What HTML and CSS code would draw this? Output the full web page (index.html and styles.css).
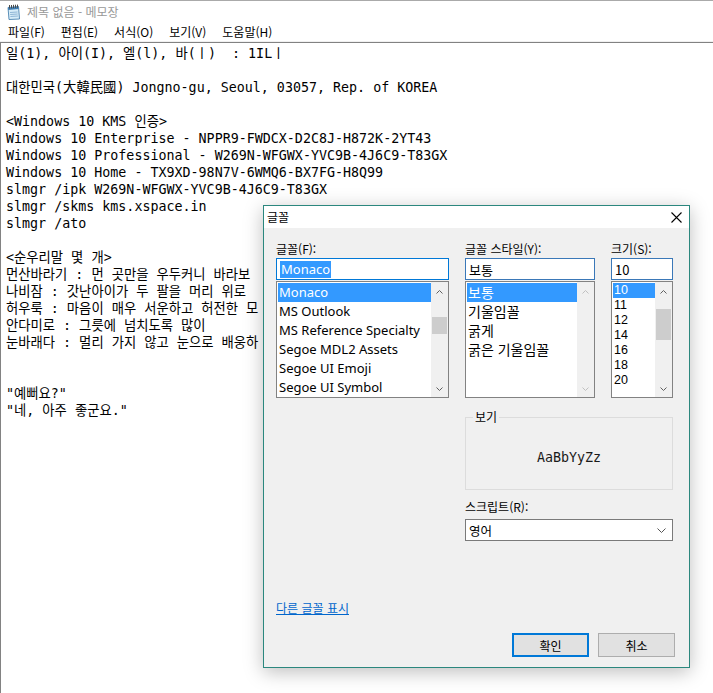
FILE: index.html
```html
<!DOCTYPE html>
<html lang="ko">
<head>
<meta charset="utf-8">
<title>제목 없음 - 메모장</title>
<link rel="stylesheet" href="styles.css">
</head>
<body>
<div class="notepad">
  <div class="titlebar">
    <svg class="app-icon" width="16" height="16" viewBox="0 0 16 16">
      <path d="M3 3.5 L13.5 2.5 L14.5 15 L4 15.5 Z" fill="#d6ecf8" stroke="#5b8fb8" stroke-width="1"/>
      <path d="M3 3.5 L13.5 2.5 L13.7 5 L3.2 6 Z" fill="#3f7fb5"/>
      <path d="M5 8.5 L12.5 8 M5.2 10.5 L12.7 10 M5.4 12.5 L12.9 12" stroke="#8fb6d6" stroke-width="1"/>
      <path d="M4.5 1 V4.5 M6.5 1 V4.3 M8.5 0.8 V4.1 M10.5 0.7 V3.9 M12.5 0.6 V3.7" stroke="#4a4a4a" stroke-width="1"/>
    </svg>
    <span class="title">제목 없음 - 메모장</span>
  </div>
  <div class="menubar">
    <span class="menu">파일(F)</span>
    <span class="menu">편집(E)</span>
    <span class="menu">서식(O)</span>
    <span class="menu">보기(V)</span>
    <span class="menu">도움말(H)</span>
  </div>
  <div class="edit">
    <div class="ln">일(1), 아이(I), 엘(l), 바(ㅣ)  : 1ILㅣ</div>
    <div class="ln"></div>
    <div class="ln">대한민국(大韓民國) Jongno-gu, Seoul, 03057, Rep. of KOREA</div>
    <div class="ln"></div>
    <div class="ln">&lt;Windows 10 KMS 인증&gt;</div>
    <div class="ln">Windows 10 Enterprise - NPPR9-FWDCX-D2C8J-H872K-2YT43</div>
    <div class="ln">Windows 10 Professional - W269N-WFGWX-YVC9B-4J6C9-T83GX</div>
    <div class="ln">Windows 10 Home - TX9XD-98N7V-6WMQ6-BX7FG-H8Q99</div>
    <div class="ln">slmgr /ipk W269N-WFGWX-YVC9B-4J6C9-T83GX</div>
    <div class="ln">slmgr /skms kms.xspace.in</div>
    <div class="ln">slmgr /ato</div>
    <div class="ln"></div>
    <div class="ln">&lt;순우리말 몇 개&gt;</div>
    <div class="ln cut">먼산바라기 : 먼 곳만을 우두커니 바라보</div>
    <div class="ln cut">나비잠 : 갓난아이가 두 팔을 머리 위로</div>
    <div class="ln cut">허우룩 : 마음이 매우 서운하고 허전한 모</div>
    <div class="ln">안다미로 : 그릇에 넘치도록 많이</div>
    <div class="ln cut">눈바래다 : 멀리 가지 않고 눈으로 배웅하</div>
    <div class="ln"></div>
    <div class="ln"></div>
    <div class="ln">"예뻐요?"</div>
    <div class="ln">"네, 아주 좋군요."</div>
  </div>

  <div class="dialog">
    <div class="dlg-title">
      <span>글꼴</span>
      <svg class="close" width="11" height="11" viewBox="0 0 11 11">
        <path d="M0.5 0.5 L10.5 10.5 M10.5 0.5 L0.5 10.5" stroke="#000" stroke-width="1.1"/>
      </svg>
    </div>
    <div class="dlg-body">
      <div class="grid">
        <div class="col">
          <div class="lbl">글꼴(F):</div>
          <div class="field focus"><span class="sel">Monaco</span></div>
          <div class="list">
            <ul class="items font-items">
              <li class="on">Monaco</li>
              <li>MS Outlook</li>
              <li>MS Reference Specialty</li>
              <li>Segoe MDL2 Assets</li>
              <li>Segoe UI Emoji</li>
              <li>Segoe UI Symbol</li>
            </ul>
            <div class="vscroll">
              <div class="arrow"><svg width="7" height="4" viewBox="0 0 7 4"><path d="M0.5 3.5 L3.5 0.5 L6.5 3.5" fill="none" stroke="#606060"/></svg></div>
              <div class="track"><div class="thumb" style="margin-top:17px;height:17px"></div></div>
              <div class="arrow"><svg width="7" height="4" viewBox="0 0 7 4"><path d="M0.5 0.5 L3.5 3.5 L6.5 0.5" fill="none" stroke="#606060"/></svg></div>
            </div>
          </div>
        </div>
        <div class="col">
          <div class="lbl">글꼴 스타일(Y):</div>
          <div class="field"><span>보통</span></div>
          <div class="list">
            <ul class="items style-items">
              <li class="on">보통</li>
              <li>기울임꼴</li>
              <li>굵게</li>
              <li>굵은 기울임꼴</li>
            </ul>
            <div class="vscroll">
              <div class="arrow"><svg width="7" height="4" viewBox="0 0 7 4"><path d="M0.5 3.5 L3.5 0.5 L6.5 3.5" fill="none" stroke="#c0c0c0"/></svg></div>
              <div class="track"></div>
              <div class="arrow"><svg width="7" height="4" viewBox="0 0 7 4"><path d="M0.5 0.5 L3.5 3.5 L6.5 0.5" fill="none" stroke="#c0c0c0"/></svg></div>
            </div>
          </div>
        </div>
        <div class="col">
          <div class="lbl">크기(S):</div>
          <div class="field"><span>10</span></div>
          <div class="list">
            <ul class="items size-items">
              <li class="on">10</li>
              <li>11</li>
              <li>12</li>
              <li>14</li>
              <li>16</li>
              <li>18</li>
              <li>20</li>
            </ul>
            <div class="vscroll">
              <div class="arrow"><svg width="7" height="4" viewBox="0 0 7 4"><path d="M0.5 3.5 L3.5 0.5 L6.5 3.5" fill="none" stroke="#606060"/></svg></div>
              <div class="track"><div class="thumb" style="margin-top:9px;height:31px"></div></div>
              <div class="arrow"><svg width="7" height="4" viewBox="0 0 7 4"><path d="M0.5 0.5 L3.5 3.5 L6.5 0.5" fill="none" stroke="#606060"/></svg></div>
            </div>
          </div>
        </div>

        <div class="preview">
          <span class="legend">보기</span>
          <span class="sample">AaBbYyZz</span>
        </div>

        <div class="script">
          <div class="lbl">스크립트(R):</div>
          <div class="combo">
            <span>영어</span>
            <svg width="9" height="5" viewBox="0 0 9 5"><path d="M0.5 0.5 L4.5 4.5 L8.5 0.5" fill="none" stroke="#555"/></svg>
          </div>
        </div>
      </div>

      <a class="more">다른 글꼴 표시</a>

      <div class="buttons">
        <div class="btn default">확인</div>
        <div class="btn">취소</div>
      </div>
    </div>
  </div>
</div>
</body>
</html>
```

FILE: styles.css
```css
html, body {
  margin: 0;
  padding: 0;
  background: #ffffff;
}

.notepad {
  position: relative;
  width: 713px;
  height: 693px;
  overflow: hidden;
  background: #ffffff;
  font-family: "Noto Sans CJK KR", "Noto Sans", sans-serif;
}

.titlebar {
  height: 22px;
  border-top: 1px solid #aaaaaa;
  display: flex;
  align-items: center;
  padding-left: 5px;
}

.app-icon {
  display: block;
  flex: none;
}

.title {
  margin-left: 6px;
  font-size: 12px;
  line-height: 16px;
  color: #999999;
}

.menubar {
  height: 18px;
  display: flex;
  align-items: center;
  gap: 16px;
  padding-left: 8px;
  border-bottom: 1px solid #f0f0f0;
  font-size: 12px;
  line-height: 16px;
  color: #000;
}

.edit {
  height: 650px;
  border-top: 1px solid #828282;
  border-left: 1px solid #828282;
  padding: 2px 0 0 5px;
  font-family: "DejaVu Sans Mono", "Noto Sans CJK KR", monospace;
  font-size: 13.33px;
  line-height: 17px;
  color: #000;
}

.ln {
  height: 17px;
  white-space: pre;
}

.ln.cut {
  width: 257px;
  overflow: hidden;
}

/* ---------- dialog ---------- */

.dialog {
  position: absolute;
  left: 263px;
  top: 205px;
  width: 427px;
  height: 463px;
  box-sizing: border-box;
  border: 1px solid #2b877e;
  background: #f0f0f0;
  box-shadow: 0 4px 18px rgba(0, 0, 0, 0.26);
  font-family: "Noto Sans", "Noto Sans CJK KR", sans-serif;
  font-size: 12px;
  color: #000;
}

.dlg-title {
  height: 22px;
  background: #ffffff;
  display: flex;
  align-items: center;
  justify-content: space-between;
  padding: 0 7px 0 3px;
  font-family: "Noto Sans CJK KR", sans-serif;
  font-size: 12px;
  line-height: 16px;
}

.close {
  display: block;
}

.dlg-body {
  padding: 12px 14px 0 12px;
}

.grid {
  display: grid;
  grid-template-columns: 173px 130px 62px;
  column-gap: 16px;
}

.lbl {
  height: 18px;
  line-height: 18px;
  font-family: "Noto Sans CJK KR", sans-serif;
  font-size: 12px;
}

.field {
  height: 22px;
  box-sizing: border-box;
  border: 1px solid #3a78b8;
  background: #ffffff;
  padding: 0 3px;
  display: flex;
  align-items: center;
  font-size: 13px;
  line-height: 17px;
  font-family: "Noto Sans CJK KR", sans-serif;
}

.field.focus {
  border-color: #0078d7;
  font-family: "Noto Sans", sans-serif;
}

.sel {
  background: #3399ff;
  color: #ffffff;
  padding: 0 1px;
}

.list {
  margin-top: 1px;
  height: 117px;
  box-sizing: border-box;
  border: 1px solid #828282;
  background: #ffffff;
  display: flex;
  overflow: hidden;
}

.items {
  flex: 1;
  margin: 0;
  padding: 1px 0 0 1px;
  list-style: none;
  min-width: 0;
}

.items li {
  padding-left: 1px;
  white-space: nowrap;
  overflow: hidden;
}

.items li.on {
  background: #3399ff;
  color: #ffffff;
}

.font-items li {
  height: 19px;
  line-height: 19px;
  font-size: 13px;
}

.style-items li {
  height: 19px;
  line-height: 19px;
  font-size: 14px;
  font-family: "Noto Sans CJK KR", sans-serif;
}

.size-items li {
  height: 15px;
  line-height: 15px;
  font-size: 12.5px;
  font-family: "Liberation Sans", sans-serif;
}

.vscroll {
  width: 17px;
  flex: none;
  background: #f0f0f0;
  display: flex;
  flex-direction: column;
  padding-top: 1px;
}

.arrow {
  height: 17px;
  flex: none;
  display: flex;
  align-items: center;
  justify-content: center;
}

.arrow svg {
  display: block;
}

.track {
  flex: 1;
}

.thumb {
  margin-left: 1px;
  margin-right: 1px;
  background: #cdcdcd;
}

.preview {
  grid-column: 2 / 4;
  position: relative;
  margin-top: 19px;
  height: 73px;
  box-sizing: border-box;
  border: 1px solid #dcdcdc;
  display: flex;
  align-items: center;
  justify-content: center;
  padding-top: 8px;
}

.legend {
  position: absolute;
  left: 7px;
  top: -9px;
  padding: 0 2px;
  background: #f0f0f0;
  font-family: "Noto Sans CJK KR", sans-serif;
  font-size: 12px;
  line-height: 16px;
}

.sample {
  font-family: "DejaVu Sans Mono", monospace;
  font-size: 13.33px;
  line-height: 16px;
  color: #1a1a1a;
}

.script {
  grid-column: 2 / 4;
  margin-top: 9px;
}

.script .lbl {
  height: 16px;
  line-height: 16px;
}

.combo {
  margin-top: 4px;
  height: 22px;
  box-sizing: border-box;
  border: 1px solid #7a7a7a;
  background: #ffffff;
  display: flex;
  align-items: center;
  justify-content: space-between;
  padding: 0 6px 0 3px;
  font-family: "Noto Sans CJK KR", sans-serif;
  font-size: 12.5px;
}

.combo svg {
  display: block;
}

.more {
  display: inline-block;
  margin-top: 59px;
  font-family: "Noto Sans CJK KR", sans-serif;
  font-size: 12px;
  line-height: 16px;
  color: #0066cc;
  text-decoration: underline;
}

.buttons {
  margin-top: 16px;
  display: flex;
  justify-content: flex-end;
  gap: 9px;
}

.btn {
  width: 77px;
  height: 24px;
  box-sizing: border-box;
  border: 1px solid #adadad;
  background: #e1e1e1;
  display: flex;
  align-items: center;
  justify-content: center;
  font-family: "Noto Sans CJK KR", sans-serif;
  font-size: 12px;
}

.btn.default {
  border: 2px solid #0078d7;
}
```
